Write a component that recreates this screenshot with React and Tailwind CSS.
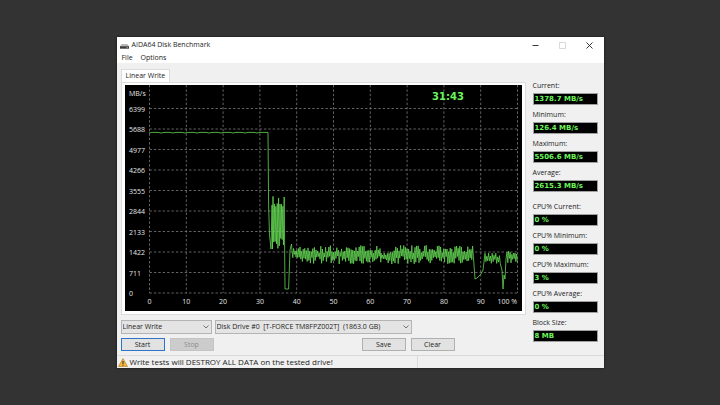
import { useState } from "react";

const SPEED_LABELS = ["6399", "5688", "4977", "4266", "3555", "2844", "2133", "1422", "711", "0"];
const PROGRESS_LABELS = ["0", "10", "20", "30", "40", "50", "60", "70", "80", "90"];

const STATS = [
  { label: "Current:", value: "1378.7 MB/s" },
  { label: "Minimum:", value: "126.4 MB/s" },
  { label: "Maximum:", value: "5506.6 MB/s" },
  { label: "Average:", value: "2615.3 MB/s" },
];

const CPU_STATS = [
  { label: "CPU% Current:", value: "0 %" },
  { label: "CPU% Minimum:", value: "0 %" },
  { label: "CPU% Maximum:", value: "3 %" },
  { label: "CPU% Average:", value: "0 %" },
  { label: "Block Size:", value: "8 MB" },
];

const gridX = (i) => 24.5 + i * 36.8;
const gridY = (i) => 23.5 + i * 20.5;

// repeatable noise, so the trace is the same on every render
function makeRandom(seed) {
  let s = seed;
  return () => {
    s = (s * 16807) % 2147483647;
    return s / 2147483647;
  };
}

function buildTrace() {
  const rand = makeRandom(4711);
  const points = [];

  // zigzag between a high and a low band
  const zigzag = (from, to, step, top, bottom, spread) => {
    let up = true;
    for (let x = from; x < to; x += step) {
      points.push([x, up ? top + rand() * spread : bottom - rand() * spread]);
      up = !up;
    }
  };

  // cache is still empty: almost flat
  for (let x = 24; x < 143; x += 3) {
    points.push([x, x % 4 === 0 ? 48 : 47.4]);
  }
  points.push([143, 47.5], [143.6, 120], [144.5, 150], [146, 164], [147, 120], [147.5, 164]);
  zigzag(148, 159, 0.7, 111, 165, 12);
  points.push([159.2, 112], [160, 204], [163.6, 204], [165, 165], [166.5, 159]);
  zigzag(167, 175, 0.8, 162, 174, 5);
  zigzag(175, 256, 0.8, 160, 179, 8);
  zigzag(256, 266, 0.8, 167, 178, 5);
  zigzag(266, 348, 0.8, 160, 179, 8);
  points.push([349, 180], [350, 194], [352, 193], [354, 191], [356, 189], [358, 185], [359, 177]);
  zigzag(360, 376, 0.9, 167, 179, 5);
  points.push([377, 185], [378, 204], [379, 190], [380, 194], [381, 174]);
  zigzag(382, 393, 0.8, 165, 178, 5);

  return points.map(([x, y]) => `${x.toFixed(1)},${y.toFixed(1)}`).join(" ");
}

const TRACE = buildTrace();

function Chart() {
  return (
    <svg viewBox="0 0 397 226" className="block w-full h-auto bg-black" role="img" aria-label="Linear Write speed">
      <g stroke="#7c7c7c" strokeWidth="0.8" strokeDasharray="2.4 2">
        {SPEED_LABELS.map((label, i) => (
          <line key={label} x1="24.5" x2="392.5" y1={gridY(i)} y2={gridY(i)} />
        ))}
        {[...PROGRESS_LABELS, "100"].map((label, i) => (
          <line key={label} x1={gridX(i)} x2={gridX(i)} y1="0" y2="208" />
        ))}
      </g>

      <polyline points={TRACE} fill="none" stroke="#63d653" strokeWidth="0.8" strokeLinejoin="round" />

      <g fill="#e4e4e4" fontSize="7">
        <text x="4" y="11">MB/s</text>
        {SPEED_LABELS.map((label, i) => (
          <text key={label} x="4" y={gridY(i) + 3}>{label}</text>
        ))}
        {PROGRESS_LABELS.map((label, i) => (
          <text key={label} x={gridX(i)} y="219" textAnchor="middle">{label}</text>
        ))}
        <text x="392" y="219" textAnchor="end">100 %</text>
      </g>
      <text x="323" y="15" textAnchor="middle" fontSize="10" fill="#6cf65a" className="font-['DejaVu_Sans'] font-bold">
        31:43
      </text>
    </svg>
  );
}

function Stat({ label, value }) {
  return (
    <div>
      <dt className="h-3 leading-[10px] whitespace-nowrap">{label}</dt>
      <dd className="h-3 border border-[#a0a0a0] bg-black pl-px font-['DejaVu_Sans'] font-bold leading-[10px] text-[#6cf65a] whitespace-nowrap overflow-hidden">
        {value}
      </dd>
    </div>
  );
}

function Select({ label, value, onChange, options, className }) {
  return (
    <div className={`relative ${className}`}>
      <select
        aria-label={label}
        value={value}
        onChange={onChange}
        className="block w-full h-[14px] appearance-none border border-[#b4b4b4] bg-[#e4e4e4] pl-px pr-3 leading-3 whitespace-pre"
      >
        {options.map((option) => (
          <option key={option}>{option}</option>
        ))}
      </select>
      <svg viewBox="0 0 6 4" className="absolute right-[3px] top-[5px] w-[6px] h-[4px] pointer-events-none">
        <path d="M0.5 0.5 3 3l2.5-2.5" fill="none" stroke="#555" strokeWidth="0.8" />
      </svg>
    </div>
  );
}

function Button({ className = "border-[#b0b0b0] bg-[#e2e2e2]", ...props }) {
  return <button type="button" className={`w-11 h-[13px] border leading-[10px] ${className}`} {...props} />;
}

export default function App() {
  const [test, setTest] = useState("Linear Write");
  const [drive, setDrive] = useState("Disk Drive #0\u00a0 [T-FORCE TM8FPZ002T]\u00a0 (1863.0 GB)");

  return (
    <div className="min-h-screen bg-[#333333] flex items-center justify-center font-['Open_Sans','Noto_Sans',sans-serif] text-[7px] text-[#1c1c1c]">
      <main className="w-full max-w-[487px] bg-[#f0f0f0] shadow-[0_0_2px_#111]">
        {/* Title bar */}
        <header className="h-4 bg-white flex items-center pl-[3px] pr-[11px]">
          <svg viewBox="0 0 9 7" className="w-[9px] h-[7px] mr-[3px]">
            <path d="M1.5 2h6L9 4.3H0z" fill="#b9b9b9" />
            <path d="M0 4.2h9v2.5H0z" fill="#3c3c3c" />
            <path d="M6.5 5h1.5v0.8H6.5z" fill="#8fb98a" />
          </svg>
          <h1 className="flex-1">AIDA64 Disk Benchmark</h1>
          <div className="flex items-center gap-5">
            <button type="button" aria-label="Minimize">
              <svg viewBox="0 0 7 7" className="block w-[7px] h-[7px]">
                <path d="M0.5 3.5h6" stroke="#222" strokeWidth="0.9" />
              </svg>
            </button>
            <button type="button" aria-label="Maximize" disabled>
              <svg viewBox="0 0 7 7" className="block w-[7px] h-[7px]">
                <path d="M0.5 0.5h6v6h-6z" fill="none" stroke="#cfcfcf" strokeWidth="0.8" />
              </svg>
            </button>
            <button type="button" aria-label="Close">
              <svg viewBox="0 0 7 7" className="block w-[7px] h-[7px]">
                <path d="M0.5 0.5l6 6M6.5 0.5l-6 6" stroke="#222" strokeWidth="0.9" />
              </svg>
            </button>
          </div>
        </header>

        <nav className="h-[10px] bg-white flex items-center gap-2 pl-[5px]">
          <button type="button">File</button>
          <button type="button">Options</button>
        </nav>

        <div className="flex gap-[7px] pl-1 pr-[6px] pt-[6px] pb-1">
          {/* Chart and controls */}
          <div className="flex-1 min-w-0">
            <div role="tablist" className="flex">
              <button
                type="button"
                role="tab"
                aria-selected="true"
                className="h-[13px] px-1 border border-b-0 border-[#dcdcdc] bg-white leading-3"
              >
                Linear Write
              </button>
            </div>
            <div className="border border-[#dcdcdc] bg-white p-[3px] pt-[2px]">
              <Chart />
            </div>

            <div className="mt-[5px] flex gap-[3px]">
              <Select
                label="Test"
                value={test}
                onChange={(e) => setTest(e.target.value)}
                options={["Linear Write"]}
                className="w-[91px]"
              />
              <Select
                label="Drive"
                value={drive}
                onChange={(e) => setDrive(e.target.value)}
                options={[drive]}
                className="w-[197px]"
              />
            </div>

            <div className="mt-1 flex gap-[5px]">
              <Button className="border-[#2f74c9] bg-[#e2e2e2]">Start</Button>
              <Button className="border-[#c4c4c4] bg-[#cccccc] text-[#8c8c8c]" disabled>
                Stop
              </Button>
              <div className="flex gap-[5px] ml-auto mr-[71px]">
                <Button>Save</Button>
                <Button>Clear</Button>
              </div>
            </div>
          </div>

          {/* Readouts */}
          <div className="w-[65px] pt-3">
            <dl className="flex flex-col gap-[5px]">
              {STATS.map((stat) => (
                <Stat key={stat.label} {...stat} />
              ))}
            </dl>
            <dl className="flex flex-col gap-[5px] mt-[10px]">
              {CPU_STATS.map((stat) => (
                <Stat key={stat.label} {...stat} />
              ))}
            </dl>
          </div>
        </div>

        {/* Status bar */}
        <footer className="h-[13px] border-t border-[#dadada] flex items-center text-[8px]">
          <p className="flex-1 max-w-[301px] h-3 flex items-center gap-[2px] pl-px border-r border-[#dadada] whitespace-nowrap">
            <svg viewBox="0 0 10 9" className="w-[10px] h-[9px]">
              <path d="M5 0.6 9.6 8.6H0.4z" fill="#f6b73c" stroke="#a8761b" strokeWidth="0.6" strokeLinejoin="round" />
              <path d="M5 3v3M5 6.7v1" stroke="#222" strokeWidth="1" />
            </svg>
            Write tests will DESTROY ALL DATA on the tested drive!
          </p>
        </footer>
      </main>
    </div>
  );
}
